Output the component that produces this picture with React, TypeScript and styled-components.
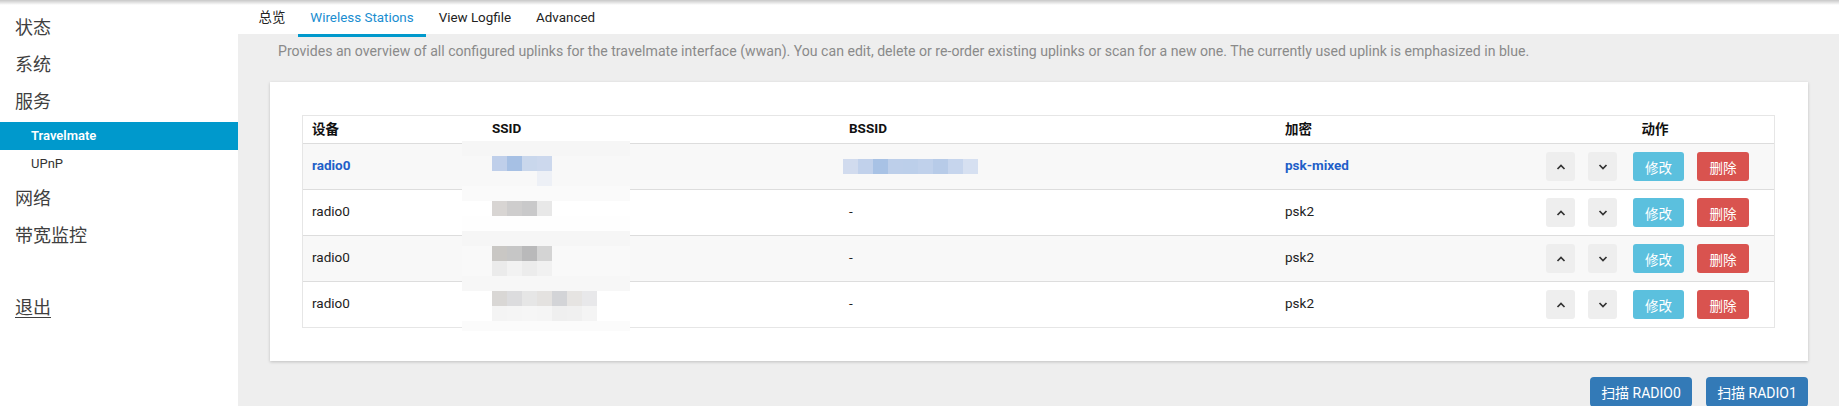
import React from "react";
import styled, { createGlobalStyle } from "styled-components";

const GlobalStyle = createGlobalStyle`
  html, body { margin: 0; padding: 0; background: #fff; overflow: hidden; }
  body { font-family: Roboto, "Noto Sans CJK SC", sans-serif; color: #222; }
  * { box-sizing: border-box; }
`;

const Page = styled.div`
  position: relative;
  display: flex;
  width: 1839px;
  height: 406px;
  overflow: hidden;
`;

const TopShadow = styled.div`
  position: absolute;
  left: 0;
  right: 0;
  top: 0;
  height: 5px;
  background: linear-gradient(rgba(0, 0, 0, 0.22), rgba(0, 0, 0, 0));
  z-index: 5;
  pointer-events: none;
`;

const Sidebar = styled.nav`
  width: 238px;
  flex: none;
  background: #fff;
  padding-top: 8px;
`;

const MenuItem = styled.div`
  height: 37px;
  line-height: 37px;
  padding-left: 15px;
  font-size: 18px;
  color: #3f3f3f;
  font-family: "Noto Sans CJK SC", sans-serif;
`;

const Logout = styled(MenuItem)`
  margin-top: 35px;
  text-decoration: underline;
  text-underline-offset: 3px;
`;

const SubMenu = styled.div`
  margin: 3px 0 1px;
`;

const SubItem = styled.div<{ $active?: boolean }>`
  height: 28px;
  line-height: 28px;
  padding-left: 31px;
  font-size: 13px;
  background: ${(p) => (p.$active ? "#0099cc" : "transparent")};
  color: ${(p) => (p.$active ? "#fff" : "#333")};
  font-weight: ${(p) => (p.$active ? 600 : 400)};
`;

const Main = styled.main`
  flex: 1;
  min-width: 0;
  display: flex;
  flex-direction: column;
  background: #eeeeee;
`;

const TabBar = styled.div`
  height: 34px;
  flex: none;
  background: #fff;
  display: flex;
  padding-left: 8px;
`;

const Tab = styled.div<{ $active?: boolean }>`
  position: relative;
  z-index: 1;
  height: 37px;
  padding: 0 12.5px;
  line-height: 35px;
  font-size: 13.4px;
  color: ${(p) => (p.$active ? "#1a8dd0" : "#222")};
  border-bottom: 3px solid ${(p) => (p.$active ? "#0099cc" : "transparent")};
`;

const Content = styled.div`
  flex: 1;
  padding: 7px 31px 0 32px;
`;

const Description = styled.p`
  margin: 0 0 0 8px;
  font-size: 14.1px;
  line-height: 20px;
  color: #8a8a8a;
`;

const Card = styled.section`
  margin-top: 21px;
  background: #fff;
  padding: 33px 33px 33px 32px;
  box-shadow: 0 1px 3px rgba(0, 0, 0, 0.2);
`;

const TableWrap = styled.div`
  position: relative;
  border: 1px solid #e6e6e6;
`;

const cols = "180px 357px 436px 260px 1fr";

const HeaderRow = styled.div`
  display: grid;
  grid-template-columns: ${cols};
  height: 27px;
  align-items: center;
  padding-bottom: 3px;
`;

const Th = styled.div<{ $center?: boolean }>`
  padding: 0 9px;
  font-size: 13.5px;
  font-weight: 700;
  color: #111;
  text-align: ${(p) => (p.$center ? "center" : "left")};
`;

const Row = styled.div<{ $striped?: boolean }>`
  display: grid;
  grid-template-columns: ${cols};
  height: 46px;
  align-items: center;
  border-top: 1px solid #dddddd;
  background: ${(p) => (p.$striped ? "#f8f8f8" : "#fff")};
`;

const Td = styled.div<{ $emph?: boolean }>`
  padding: 0 9px 3px;
  font-size: 13.5px;
  color: ${(p) => (p.$emph ? "#1f5fc8" : "#222")};
  font-weight: ${(p) => (p.$emph ? 700 : 400)};
`;

const Actions = styled.div`
  display: flex;
  align-items: center;
  padding-left: 10px;
`;

const MoveBtn = styled.button<{ $gap?: number }>`
  width: 29px;
  height: 29px;
  margin-left: ${(p) => p.$gap ?? 0}px;
  border: none;
  border-radius: 3px;
  background: #eeeeee;
  display: flex;
  align-items: center;
  justify-content: center;
  padding: 0;
`;

const ActBtn = styled.button<{ $kind: "edit" | "del"; $gap: number }>`
  height: 29px;
  width: ${(p) => (p.$kind === "edit" ? 51 : 52)}px;
  margin-left: ${(p) => p.$gap}px;
  border: none;
  border-radius: 3px;
  background: ${(p) => (p.$kind === "edit" ? "#5bc0de" : "#d9534f")};
  color: #fff;
  font-family: "Noto Sans CJK SC", sans-serif;
  font-size: 13.5px;
  padding: 0;
`;

const Mosaic = styled.svg`
  position: absolute;
  left: -1px;
  top: -1px;
  pointer-events: none;
`;

const ScanRow = styled.div`
  display: flex;
  justify-content: flex-end;
  gap: 14px;
  margin-top: 16px;
`;

const ScanBtn = styled.button`
  height: 30px;
  width: 102px;
  border: none;
  border-radius: 4px;
  background: #337ab7;
  color: #fff;
  font-family: Roboto, "Noto Sans CJK SC", sans-serif;
  font-size: 14px;
  padding: 0;
`;

const Chevron = ({ up }: { up?: boolean }) => (
  <svg width="10" height="6" viewBox="0 0 10 6">
    <polyline
      points={up ? "1.5,5 5,1.5 8.5,5" : "1.5,1 5,4.5 8.5,1"}
      fill="none"
      stroke="#333"
      strokeWidth="1.7"
    />
  </svg>
);

type Block = [number, number, string];

const bands: [number, number, string][] = [
  [26, 15, "#f6f6f6"],
  [41, 15, "#f8f8f8"],
  [56, 15, "#f8f8f8"],
  [71, 15, "#fafafa"],
  [86, 15, "#ffffff"],
  [101, 15, "#fefefe"],
  [116, 15, "#f6f6f6"],
  [131, 15, "#f9f9f9"],
  [146, 15, "#f9f9f9"],
  [161, 15, "#f7f7f7"],
  [176, 15, "#ffffff"],
  [191, 15, "#ffffff"],
  [206, 10, "#fbfbfb"],
];

const rowBlocks = (y: number, x0: number, colors: string[]): Block[] =>
  colors.map((c, i) => [x0 + i * 15, y, c]);

const blocks: Block[] = [
  ...rowBlocks(41, 190, ["#bfcfea", "#a6c0e4", "#c9d7ec", "#ccd8ed"]),
  [235, 56, "#edf0f6"],
  ...rowBlocks(86, 190, ["#d8d5d3", "#cecdcd", "#c9c9ca", "#e8e8e8"]),
  ...rowBlocks(131, 190, ["#c9c7c4", "#c6c6c6", "#b9b9ba", "#d4d4d4"]),
  ...rowBlocks(146, 190, ["#ebebeb", "#f2f2f2", "#ececec", "#f1f1f1"]),
  ...rowBlocks(176, 190, ["#d9d7d5", "#dcdcde", "#e6e6e6", "#e4e2e0", "#d3d4d7", "#e6e4e2", "#e8e8ea"]),
  ...rowBlocks(191, 190, ["#f4f4f4", "#f5f5f5", "#f6f6f6", "#f5f5f5", "#efefef", "#f0f0f0", "#f4f4f4"]),
  ...rowBlocks(44, 541, ["#d1dbee", "#c1d1eb", "#a8c2e5", "#bdcfea", "#bccfea", "#c0d1eb", "#b7cbe8", "#c6d5ed", "#d6e0f1"]),
];

const rows = [
  { emph: true, bssid: "", enc: "psk-mixed" },
  { emph: false, bssid: "-", enc: "psk2" },
  { emph: false, bssid: "-", enc: "psk2" },
  { emph: false, bssid: "-", enc: "psk2" },
];

export default function App() {
  return (
    <>
      <GlobalStyle />
      <Page>
        <TopShadow />
        <Sidebar>
          <MenuItem>状态</MenuItem>
          <MenuItem>系统</MenuItem>
          <MenuItem>服务</MenuItem>
          <SubMenu>
            <SubItem $active>Travelmate</SubItem>
            <SubItem>UPnP</SubItem>
          </SubMenu>
          <MenuItem>网络</MenuItem>
          <MenuItem>带宽监控</MenuItem>
          <Logout>退出</Logout>
        </Sidebar>
        <Main>
          <TabBar>
            <Tab>总览</Tab>
            <Tab $active>Wireless Stations</Tab>
            <Tab>View Logfile</Tab>
            <Tab>Advanced</Tab>
          </TabBar>
          <Content>
            <Description>
              Provides an overview of all configured uplinks for the travelmate interface (wwan). You can edit, delete or
              re-order existing uplinks or scan for a new one. The currently used uplink is emphasized in blue.
            </Description>
            <Card>
              <TableWrap>
                <HeaderRow>
                  <Th>设备</Th>
                  <Th>SSID</Th>
                  <Th>BSSID</Th>
                  <Th>加密</Th>
                  <Th $center>动作</Th>
                </HeaderRow>
                {rows.map((r, i) => (
                  <Row key={i} $striped={i % 2 === 0}>
                    <Td $emph={r.emph}>radio0</Td>
                    <Td />
                    <Td>{r.bssid}</Td>
                    <Td $emph={r.emph}>{r.enc}</Td>
                    <Actions>
                      <MoveBtn aria-label="up">
                        <Chevron up />
                      </MoveBtn>
                      <MoveBtn aria-label="down" $gap={13}>
                        <Chevron />
                      </MoveBtn>
                      <ActBtn $kind="edit" $gap={16}>
                        修改
                      </ActBtn>
                      <ActBtn $kind="del" $gap={13}>
                        删除
                      </ActBtn>
                    </Actions>
                  </Row>
                ))}
                <Mosaic width="700" height="230">
                  {bands.map(([y, h, c], i) => (
                    <rect key={"b" + i} x={160} y={y} width={168} height={h} fill={c} />
                  ))}
                  {blocks.map(([x, y, c], i) => (
                    <rect key={"k" + i} x={x} y={y} width={15} height={15} fill={c} />
                  ))}
                </Mosaic>
              </TableWrap>
            </Card>
            <ScanRow>
              <ScanBtn>扫描 RADIO0</ScanBtn>
              <ScanBtn>扫描 RADIO1</ScanBtn>
            </ScanRow>
          </Content>
        </Main>
      </Page>
    </>
  );
}
